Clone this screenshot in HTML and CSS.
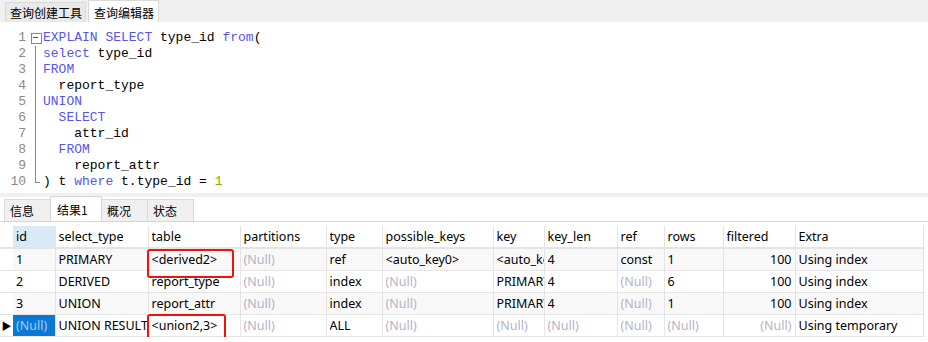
FILE: index.html
```html
<!DOCTYPE html>
<html lang="zh-CN">
<head>
  <meta charset="UTF-8" />
  <title>查询编辑器</title>
  <link rel="stylesheet" href="styles.css">
</head>
<body>
  <div class="top-tabs">
    <div class="tab">查询创建工具</div>
    <div class="tab active">查询编辑器</div>
  </div>

  <div class="editor">
    <div class="line"><span class="num">1</span><span class="fold box"></span><span class="code"><b class="kw">EXPLAIN SELECT</b> type_id <b class="kw">from</b>(</span></div>
    <div class="line"><span class="num">2</span><span class="fold bar"></span><span class="code"><b class="kw">select</b> type_id</span></div>
    <div class="line"><span class="num">3</span><span class="fold bar"></span><span class="code"><b class="kw">FROM</b></span></div>
    <div class="line"><span class="num">4</span><span class="fold bar"></span><span class="code">  report_type</span></div>
    <div class="line"><span class="num">5</span><span class="fold bar"></span><span class="code"><b class="kw">UNION</b></span></div>
    <div class="line"><span class="num">6</span><span class="fold bar"></span><span class="code">  <b class="kw">SELECT</b></span></div>
    <div class="line"><span class="num">7</span><span class="fold bar"></span><span class="code">    attr_id</span></div>
    <div class="line"><span class="num">8</span><span class="fold bar"></span><span class="code">  <b class="kw">FROM</b></span></div>
    <div class="line"><span class="num">9</span><span class="fold bar"></span><span class="code">    report_attr</span></div>
    <div class="line"><span class="num">10</span><span class="fold end"></span><span class="code">) t <b class="kw">where</b> t.type_id = <b class="lit">1</b></span></div>
  </div>

  <div class="splitter"></div>

  <div class="result-tabs">
    <div class="rtab">信息</div>
    <div class="rtab active">结果1</div>
    <div class="rtab">概况</div>
    <div class="rtab">状态</div>
  </div>

  <table class="grid">
    <colgroup>
      <col class="c-ind"><col class="c-id"><col class="c-sel"><col class="c-tbl">
      <col class="c-part"><col class="c-type"><col class="c-pk"><col class="c-key">
      <col class="c-klen"><col class="c-ref"><col class="c-rows"><col class="c-filt">
      <col class="c-extra">
    </colgroup>
    <tr class="head">
      <th class="ind"></th><th class="sel"><span>id</span></th><th><span>select_type</span></th><th><span>table</span></th><th><span>partitions</span></th><th><span>type</span></th>
      <th><span>possible_keys</span></th><th><span>key</span></th><th><span>key_len</span></th><th><span>ref</span></th><th><span>rows</span></th><th><span>filtered</span></th><th><span>Extra</span></th>
    </tr>
    <tr class="odd">
      <td class="ind"></td><td><span>1</span></td><td><span>PRIMARY</span></td><td class="mark m1"><span>&lt;derived2&gt;</span></td><td class="null"><span>(Null)</span></td><td><span>ref</span></td>
      <td><span>&lt;auto_key0&gt;</span></td><td><span>&lt;auto_key0&gt;</span></td><td><span>4</span></td><td><span>const</span></td><td><span>1</span></td><td class="num-r"><span>100</span></td><td><span>Using index</span></td>
    </tr>
    <tr>
      <td class="ind"></td><td><span>2</span></td><td><span>DERIVED</span></td><td><span>report_type</span></td><td class="null"><span>(Null)</span></td><td><span>index</span></td>
      <td class="null"><span>(Null)</span></td><td><span>PRIMARY</span></td><td><span>4</span></td><td class="null"><span>(Null)</span></td><td><span>6</span></td><td class="num-r"><span>100</span></td><td><span>Using index</span></td>
    </tr>
    <tr class="odd">
      <td class="ind"></td><td><span>3</span></td><td><span>UNION</span></td><td><span>report_attr</span></td><td class="null"><span>(Null)</span></td><td><span>index</span></td>
      <td class="null"><span>(Null)</span></td><td><span>PRIMARY</span></td><td><span>4</span></td><td class="null"><span>(Null)</span></td><td><span>1</span></td><td class="num-r"><span>100</span></td><td><span>Using index</span></td>
    </tr>
    <tr>
      <td class="ind cur">&#9654;</td><td class="picked"><span>(Null)</span></td><td><span>UNION RESULT</span></td><td class="mark m2"><span>&lt;union2,3&gt;</span></td><td class="null"><span>(Null)</span></td><td><span>ALL</span></td>
      <td class="null"><span>(Null)</span></td><td class="null"><span>(Null)</span></td><td class="null"><span>(Null)</span></td><td class="null"><span>(Null)</span></td><td class="null"><span>(Null)</span></td><td class="num-r null"><span>(Null)</span></td><td><span>Using temporary</span></td>
    </tr>
  </table>
</body>
</html>
```

FILE: styles.css
```css
* { box-sizing: border-box; }
body {
  margin: 0;
  background: #fff;
  font-family: "Noto Sans", "Noto Sans CJK SC", sans-serif;
  font-size: 12.5px;
  color: #000;
  overflow: hidden;
}

.top-tabs {
  display: flex;
  height: 22px;
  padding: 0 0 0 5px;
  background: #f0f0f0;
}
.tab {
  font-family: "Noto Sans CJK SC", sans-serif;
  font-size: 12px;
  white-space: nowrap;
  line-height: 19px;
  height: 20px;
  margin-top: 2px;
  padding: 0 3px 0 4px;
  background: #e9e9e9;
  border: 1px solid #d9d9d9;
  border-bottom: none;
}
.tab.active {
  height: 22px;
  margin: 0 0 0 2px;
  padding: 0 4px 0 5px;
  line-height: 23px;
  background: #fff;
}

.editor {
  height: 171px;
  padding-top: 8px;
  overflow: hidden;
  font-family: "Liberation Mono", monospace;
  font-size: 13px;
}
.line {
  display: flex;
  height: 16px;
  line-height: 16px;
}
.num {
  width: 26px;
  text-align: right;
  color: #8a8a8a;
}
.fold {
  position: relative;
  width: 17px;
}
.fold.box::before {
  content: "";
  position: absolute;
  left: 5px; top: 3px;
  width: 9px; height: 9px;
  border: 1px solid #888;
  background: #fff;
}
.fold.box::after {
  content: "";
  position: absolute;
  left: 7px; top: 7px;
  width: 5px; height: 1px;
  background: #555;
}
.fold.bar::before, .fold.end::before {
  content: "";
  position: absolute;
  left: 9px; top: 0;
  width: 1px; height: 16px;
  background: #888;
}
.fold.end::before { height: 9px; }
.fold.end::after {
  content: "";
  position: absolute;
  left: 9px; top: 8px;
  width: 5px; height: 1px;
  background: #888;
}
.code { white-space: pre; }
.kw { font-weight: normal; color: #5555ee; }
.lit { font-weight: normal; color: #80b000; }

.splitter {
  height: 4px;
  background: #f0f0f0;
}

.result-tabs {
  display: flex;
  height: 25px;
  padding: 0 0 0 4px;
  border-bottom: 1px solid #d6d6d6;
  align-items: flex-end;
}
.rtab {
  font-family: "Noto Sans CJK SC", sans-serif;
  font-size: 12px;
  white-space: nowrap;
  width: 47px;
  height: 22px;
  line-height: 21px;
  padding: 0 5px;
  background: #f0f0f0;
  border: 1px solid #d9d9d9;
  border-bottom: none;
  margin-right: -1px;
}
.rtab.active {
  width: 52px;
  height: 25px;
  line-height: 25px;
  padding: 0 6px;
  background: #fff;
}

.grid {
  margin-top: 4px;
  border-collapse: collapse;
  table-layout: fixed;
  width: 923px;
}
.c-ind { width: 13px; }
.c-id { width: 42px; }
.c-sel { width: 93px; }
.c-tbl { width: 92px; }
.c-part { width: 86px; }
.c-type { width: 56px; }
.c-pk { width: 111px; }
.c-key { width: 51px; }
.c-klen { width: 73px; }
.c-ref { width: 47px; }
.c-rows { width: 59px; }
.c-filt { width: 72px; }
.c-extra { width: 128px; }

.grid th, .grid td {
  height: 22px;
  padding: 0 0 0 3px;
  text-align: left;
  font-weight: normal;
  white-space: nowrap;
  border-right: 1px solid #e4e4e4;
  border-bottom: 1px solid #e4e4e4;
}
.grid th span, .grid td span {
  display: block;
  overflow: hidden;
}
.grid .head th { border-bottom: 2px solid #e4e4e4; }
.grid .ind {
  padding: 0;
  border-right: none;
  font-size: 10px;
  text-align: center;
}
.grid .head .sel { background: #d9e9f8; }
.grid tr.odd td { background: #f8f8f8; }
.grid tr.odd td.ind { background: #fff; }
.grid .null { color: #b3b3c6; }
.grid .num-r { text-align: right; padding: 0 3px 0 0; }
.grid .picked {
  background: #0a78d4;
  color: #a9cdf0;
}
.grid .mark { position: relative; }
.grid .mark::after {
  content: "";
  position: absolute;
  left: -2px; top: 0;
  border: 2.5px solid #f01010;
  border-radius: 3px;
}
.grid .m1::after { width: 83px; height: 25px; }
.grid .m2::after { width: 75px; height: 23px; top: -1px; }
```
